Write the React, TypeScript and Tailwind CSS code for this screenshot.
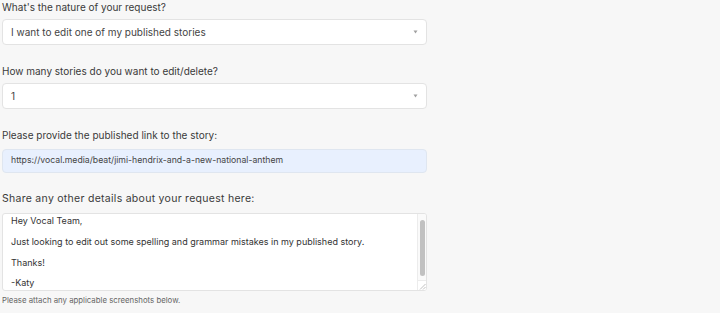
import React from 'react';

const font = { fontFamily: 'Inter, "Liberation Sans", sans-serif' };

const Caret = () => (
  <svg width="5" height="4" viewBox="0 0 5 4" className="shrink-0">
    <path d="M0.5 0.5 L4.5 0.5 L2.5 3.5 Z" fill="#a0a0a0" />
  </svg>
);

const Label: React.FC<{ text: string; className?: string }> = ({ text, className = '' }) => (
  <div className={`h-[14px] leading-[14px] text-[#3a3a3a] ${className}`}>{text}</div>
);

const SelectBox: React.FC<{ value: string }> = ({ value }) => (
  <div className="mt-[5px] flex h-[26px] items-center justify-between rounded-[4px] border border-[#e3e3e3] bg-white pl-[8px] pr-[8px]">
    <span className="text-[10px] text-[#444444]">{value}</span>
    <Caret />
  </div>
);

export default function App() {
  return (
    <div className="h-[313px] w-[720px] bg-[#f7f7f7]" style={font}>
      <div className="flex w-[429px] flex-col px-[2px]">
        <Label text="What's the nature of your request?" className="text-[10px]" />
        <SelectBox value="I want to edit one of my published stories" />

        <Label text="How many stories do you want to edit/delete?" className="mt-[19px] text-[10px]" />
        <SelectBox value="1" />

        <Label text="Please provide the published link to the story:" className="mt-[19px] text-[10px]" />
        <div className="mt-[7px] flex h-[24px] items-center rounded-[4px] border border-[#dfe6f0] bg-[#e8f0fe] px-[8px] text-[8.7px] text-[#444444]">
          https://vocal.media/beat/jimi-hendrix-and-a-new-national-anthem
        </div>

        <Label
          text="Share any other details about your request here:"
          className="mt-[19px] text-[10.5px] tracking-[0.28px]"
        />
        <div className="mt-[7px] flex h-[78px] overflow-hidden rounded-[3px] border border-[#e3e3e3] bg-white">
          <div className="flex-1 pl-[8px] text-[9px] text-[#333333]">
            <div className="leading-[14px]">Hey Vocal Team,</div>
            <div className="mt-[7px] leading-[14px]">Just looking to edit out some spelling and grammar mistakes in my published story.</div>
            <div className="mt-[7px] leading-[14px]">Thanks!</div>
            <div className="mt-[6px] leading-[14px]">-Katy</div>
          </div>
          <div className="flex w-[9px] flex-col border-l border-[#ececec] bg-[#fafafa]">
            <div className="flex flex-1 justify-center pt-[6px] pb-[4px]">
              <div className="w-[5px] rounded-full bg-[#c1c1c1]" />
            </div>
            <div className="flex h-[10px] items-end justify-end border-t border-[#ececec] bg-white">
              <svg width="7" height="7" viewBox="0 0 7 7">
                <path d="M6.5 1 L1 6.5 M6.5 4 L4 6.5" stroke="#b0b0b0" strokeWidth="0.8" />
              </svg>
            </div>
          </div>
        </div>

        <div className="mt-[3px] text-[7.8px] leading-[12px] text-[#666666]">Please attach any applicable screenshots below.</div>
      </div>
    </div>
  );
}
